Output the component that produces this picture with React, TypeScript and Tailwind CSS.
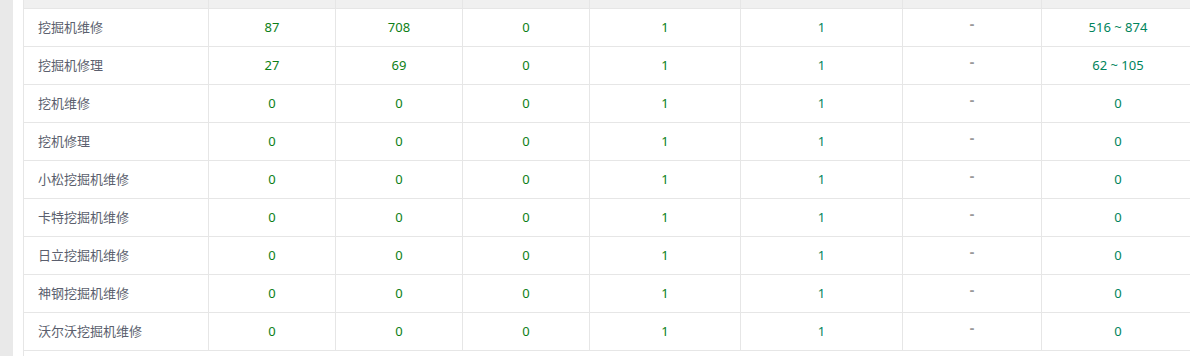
import React from "react";

const cols = [
  "w-[185px]",
  "w-[127px]",
  "w-[127px]",
  "w-[127px]",
  "w-[151px]",
  "w-[162px]",
  "w-[139px]",
  "w-[170px]",
];

const rows = [
  ["挖掘机维修", "87", "708", "0", "1", "1", "516 ~ 874"],
  ["挖掘机修理", "27", "69", "0", "1", "1", "62 ~ 105"],
  ["挖机维修", "0", "0", "0", "1", "1", "0"],
  ["挖机修理", "0", "0", "0", "1", "1", "0"],
  ["小松挖掘机维修", "0", "0", "0", "1", "1", "0"],
  ["卡特挖掘机维修", "0", "0", "0", "1", "1", "0"],
  ["日立挖掘机维修", "0", "0", "0", "1", "1", "0"],
  ["神钢挖掘机维修", "0", "0", "0", "1", "1", "0"],
  ["沃尔沃挖掘机维修", "0", "0", "0", "1", "1", "0"],
];

function Row({ r }: { r: string[] }) {
  return (
    <div className="flex h-[38px] border-b border-[#e6e6e6]">
      <div className={`${cols[0]} shrink-0 border-r border-[#e6e6e6] flex items-center pl-[14px] text-[#5b5f6e]`}>
        {r[0]}
      </div>
      <div className={`${cols[1]} shrink-0 border-r border-[#e6e6e6] flex items-center justify-center text-[#0d7f17]`}>
        {r[1]}
      </div>
      <div className={`${cols[2]} shrink-0 border-r border-[#e6e6e6] flex items-center justify-center text-[#0d7f17]`}>
        {r[2]}
      </div>
      <div className={`${cols[3]} shrink-0 border-r border-[#e6e6e6] flex items-center justify-center text-[#0d7f17]`}>
        {r[3]}
      </div>
      <div className={`${cols[4]} shrink-0 border-r border-[#e6e6e6] flex items-center justify-center text-[#0d7f17]`}>
        {r[4]}
      </div>
      <div className={`${cols[5]} shrink-0 border-r border-[#e6e6e6] flex items-center justify-center text-[#00845c]`}>
        {r[5]}
      </div>
      <div className={`${cols[6]} shrink-0 border-r border-[#e6e6e6] flex items-center justify-center text-[#999] pb-[9px] text-[14px] font-bold`}>
        -
      </div>
      <div className={`${cols[7]} shrink-0 flex items-center justify-center text-[#00845c] pr-[18px]`}>
        {r[6]}
      </div>
    </div>
  );
}

export default function App() {
  return (
    <div
      className="flex w-[1190px] h-[356px] overflow-hidden bg-white text-[13px]"
      style={{ fontFamily: '"Noto Sans", "Noto Sans CJK SC", sans-serif' }}
    >
      <div className="w-[13px] shrink-0 bg-[#e9e9e9]" />
      <div className="w-[10px] shrink-0" />
      <div className="shrink-0 border-l border-[#e6e6e6]">
        <div className="flex h-[9px] bg-[#f0f0f0] border-b border-[#e6e6e6]">
          {cols.map((c, i) => (
            <div key={i} className={`${c} shrink-0 ${i < 7 ? "border-r border-[#e6e6e6]" : ""}`} />
          ))}
        </div>
        {rows.map((r, i) => (
          <Row key={i} r={r} />
        ))}
      </div>
    </div>
  );
}
